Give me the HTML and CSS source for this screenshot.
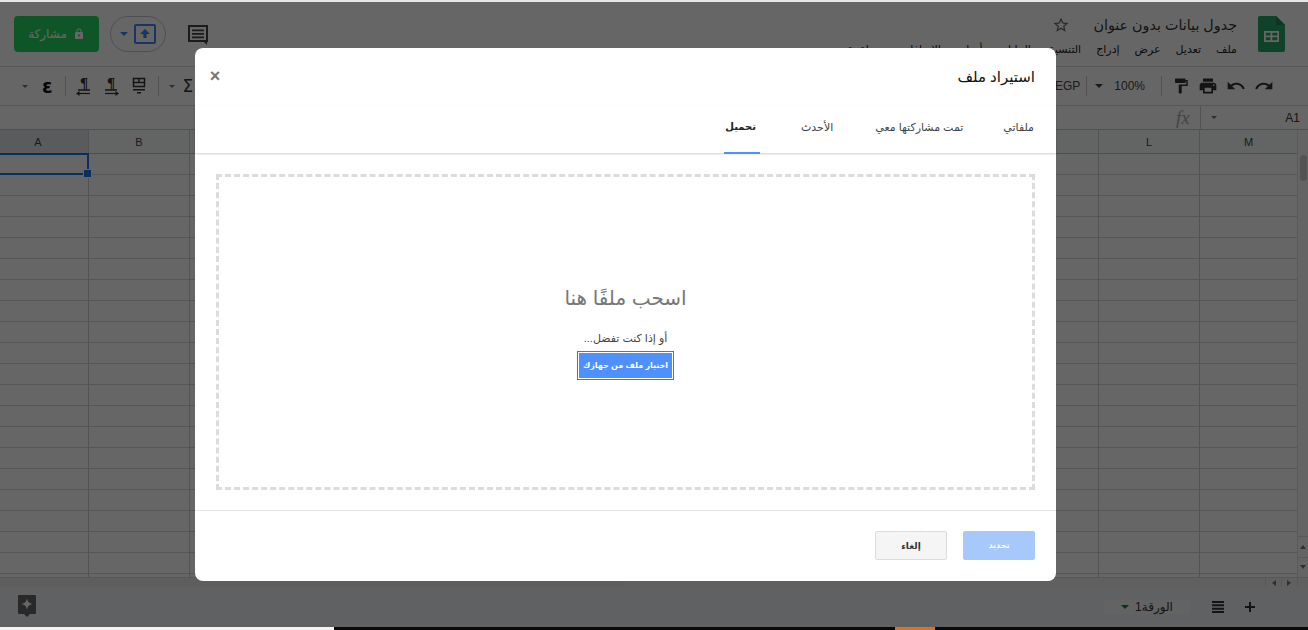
FILE: index.html
```html
<!DOCTYPE html>
<html lang="ar">
<head>
<meta charset="utf-8">
<title>جدول بيانات بدون عنوان</title>
<link rel="stylesheet" href="styles.css">
</head>
<body>
<div class="top-edge"></div>
<div class="app">
  <header class="header">
    <div class="header-left">
      <button class="share"><span dir="rtl">مشاركة</span>
        <svg class="i12" viewBox="0 0 24 24"><path fill="#fff" d="M18 8h-1V6c0-2.76-2.24-5-5-5S7 3.24 7 6v2H6c-1.1 0-2 .9-2 2v10c0 1.1.9 2 2 2h12c1.1 0 2-.9 2-2V10c0-1.1-.9-2-2-2zm-6 9c-1.1 0-2-.9-2-2s.9-2 2-2 2 .9 2 2-.9 2-2 2zm3.1-9H8.9V6c0-1.71 1.39-3.1 3.1-3.1 1.71 0 3.1 1.39 3.1 3.1v2z"/></svg>
      </button>
      <div class="present">
        <span class="caret blue"></span>
        <svg class="present-icon" viewBox="0 0 22 22"><rect x="1" y="2" width="20" height="18" rx="1" fill="none" stroke="#4285f4" stroke-width="2"/><path fill="#4285f4" d="M11 6l5 5h-3.400v4h-3.200v-4H6z"/></svg>
      </div>
      <svg class="comment" viewBox="0 0 20 22"><path fill="none" stroke="#444" stroke-width="2" d="M1 2h18v15H1z"/><path fill="#444" d="M4 5.500h12v1.800H4zM4 9h12v1.800H4zM4 12.500h12v1.800H4zM15 17h4v4z"/></svg>
    </div>
    <div class="header-right">
      <div class="doc">
        <div class="doc-title">
          <svg class="i18" viewBox="0 0 24 24"><path fill="#5f6368" d="M22 9.240l-7.190-.620L12 2 9.190 8.630 2 9.240l5.460 4.730L5.820 21 12 17.270 18.180 21l-1.630-7.030L22 9.240zM12 15.400l-3.760 2.270 1-4.280-3.320-2.880 4.380-.380L12 6.100l1.710 4.040 4.380.380-3.320 2.880 1 4.280L12 15.400z"/></svg>
          <span class="title-text" dir="rtl">جدول بيانات بدون عنوان</span>
        </div>
        <nav class="menu" dir="rtl">
          <span>ملف</span><span>تعديل</span><span>عرض</span><span>إدراج</span><span>التنسيق</span><span>البيانات</span><span>أدوات</span><span>الإضافات</span><span>مساعدة</span>
        </nav>
      </div>
      <svg class="logo" viewBox="0 0 27 36"><path fill="#23a566" d="M2 0h16l9 9v25a2 2 0 0 1-2 2H2a2 2 0 0 1-2-2V2a2 2 0 0 1 2-2z"/><path fill="#1c8a55" d="M18 0l9 9h-9z"/><path fill="#fff" d="M6 15h15v11H6zm1.800 1.800v2.800h4.700v-2.800zm6.500 0v2.800h5v-2.800zm-6.500 4.500v3h4.700v-3zm6.500 0v3h5v-3z"/></svg>
    </div>
  </header>

  <div class="toolbar">
    <div class="tools tools-left">
      <span class="caret small"></span>
      <span class="glyph epsilon">ε</span>
      <span class="tb-sep sep-a"></span>
      <svg class="i20 p1" viewBox="0 0 20 20"><text class="para" x="10" y="12" text-anchor="middle">¶</text><path stroke="#333" stroke-width="1.500" d="M4 14h12"/><path stroke="#333" stroke-width="1.200" d="M4 17.500h12"/><path fill="#333" d="M2 17.500l3.500-2.500v5z"/></svg>
      <svg class="i20 p2" viewBox="0 0 20 20"><text class="para" x="10" y="12" text-anchor="middle">¶</text><path stroke="#333" stroke-width="1.500" d="M4 14h12"/><path stroke="#333" stroke-width="1.200" d="M4 17.500h12"/><path fill="#333" d="M18 17.500l-3.500-2.500v5z"/></svg>
      <svg class="i20 p3" viewBox="0 0 20 20"><path fill="none" stroke="#333" stroke-width="1.500" d="M4.500 2.500h11v8h-11zM4.500 6.500h11M10 2.500v4"/><path fill="#333" d="M4 13h12v1.600H4zM8 16h4v1.600H8z"/></svg>
      <span class="tb-sep sep-b"></span>
      <span class="caret small caret-b"></span>
      <span class="glyph sigma">Σ</span>
    </div>
    <div class="tools tools-right">
      <span class="egp">EGP</span>
      <span class="tb-sep short"></span>
      <span class="caret"></span>
      <span class="zoom-val">100%</span>
      <span class="tb-sep zoom-sep"></span>
      <svg class="i18" viewBox="0 0 24 24"><path fill="#333" d="M18 4V3c0-.550-.450-1-1-1H5c-.550 0-1 .450-1 1v4c0 .550.450 1 1 1h12c.550 0 1-.450 1-1V6h1v4H9v11c0 .550.450 1 1 1h2c.550 0 1-.450 1-1v-9h8V4h-3z"/></svg>
      <svg class="i20" viewBox="0 0 24 24"><path fill="#333" d="M19 8H5c-1.660 0-3 1.340-3 3v6h4v4h12v-4h4v-6c0-1.660-1.340-3-3-3zm-3 11H8v-5h8v5zm3-7c-.550 0-1-.450-1-1s.450-1 1-1 1 .450 1 1-.450 1-1 1zm-1-9H6v4h12V3z"/></svg>
      <svg class="i20" viewBox="0 0 24 24"><path fill="#333" d="M12.500 8c-2.650 0-5.050.990-6.900 2.600L2 7v9h9l-3.620-3.620c1.390-1.160 3.160-1.880 5.120-1.880 3.540 0 6.550 2.310 7.600 5.500l2.370-.780C21.080 11.030 17.150 8 12.500 8z"/></svg>
      <svg class="i20" viewBox="0 0 24 24"><path fill="#333" d="M18.400 10.600C16.550 8.990 14.150 8 11.500 8c-4.650 0-8.580 3.030-9.960 7.220L3.900 16c1.050-3.190 4.050-5.500 7.600-5.500 1.950 0 3.730.720 5.120 1.880L13 16h9V7l-3.600 3.600z"/></svg>
    </div>
  </div>

  <div class="formula">
    <span class="fx">fx</span>
    <span class="tb-sep tall"></span>
    <span class="caret small"></span>
    <span class="cell-name">A1</span>
  </div>

  <div class="sheet-wrap">
    <div class="sheet">
      <div class="col col-a"><div class="col-head selected">A</div><div class="col-body"></div></div>
      <div class="col"><div class="col-head">B</div><div class="col-body"></div></div>
      <div class="col"><div class="col-head">C</div><div class="col-body"></div></div>
      <div class="col"><div class="col-head">D</div><div class="col-body"></div></div>
      <div class="col"><div class="col-head">E</div><div class="col-body"></div></div>
      <div class="col"><div class="col-head">F</div><div class="col-body"></div></div>
      <div class="col"><div class="col-head">G</div><div class="col-body"></div></div>
      <div class="col"><div class="col-head">H</div><div class="col-body"></div></div>
      <div class="col"><div class="col-head">I</div><div class="col-body"></div></div>
      <div class="col"><div class="col-head">J</div><div class="col-body"></div></div>
      <div class="col"><div class="col-head">K</div><div class="col-body"></div></div>
      <div class="col"><div class="col-head">L</div><div class="col-body"></div></div>
      <div class="col col-m"><div class="col-head">M</div><div class="col-body"></div></div>
      <div class="selection"></div>
    </div>
    <div class="vscroll">
      <div class="vthumb"></div>
      <div class="vbuttons"><span class="tri up"></span><span class="tri down"></span></div>
    </div>
  </div>

  <div class="hscroll">
    <div class="hthumb"></div>
    <div class="hbuttons"><span class="tri left"></span><span class="tri right"></span></div>
  </div>

  <div class="sheetbar">
    <svg class="explore" viewBox="0 0 18 22"><path fill="#666" d="M1 0h16a1 1 0 0 1 1 1v17a1 1 0 0 1-1 1h-5l-3 3-3-3H1a1 1 0 0 1-1-1V1a1 1 0 0 1 1-1z"/><path fill="#fff" d="M9 3.500c.700 3.300 2.200 4.800 5.500 5.500-3.300.700-4.800 2.200-5.500 5.500-.700-3.300-2.200-4.800-5.500-5.500 3.300-.700 4.800-2.200 5.500-5.500z"/></svg>
    <div class="sheetbar-right">
      <div class="tab"><span class="caret green"></span><span dir="rtl">الورقة1</span></div>
      <svg class="bar-icon list-icon" viewBox="0 0 12 12"><path fill="#333" d="M0 0h12v2H0zM0 3.300h12v2H0zM0 6.700h12v2H0zM0 10h12v2H0z"/></svg>
      <svg class="bar-icon" viewBox="0 0 12 12"><path fill="#333" d="M5 1h2v4h4v2H7v4H5V7H1V5h4z"/></svg>
    </div>
  </div>

  <div class="overlay">
    <section class="dialog" dir="rtl">
      <div class="dialog-head">
        <h1 class="dialog-title">استيراد ملف</h1>
        <button class="close" aria-label="إغلاق">×</button>
      </div>
      <div class="tabs">
        <span class="dtab t1">ملفاتي</span>
        <span class="dtab t2">تمت مشاركتها معي</span>
        <span class="dtab t3">الأحدث</span>
        <span class="dtab t4 active">تحميل</span>
      </div>
      <div class="dialog-body">
        <div class="dropzone">
          <div class="drop-title">اسحب ملفًا هنا</div>
          <div class="drop-sub">أو إذا كنت تفضل...</div>
          <button class="pick">اختيار ملف من جهازك</button>
        </div>
      </div>
      <div class="dialog-foot">
        <button class="btn btn-select">تحديد</button>
        <button class="btn btn-cancel">إلغاء</button>
      </div>
    </section>
  </div>
</div>
<div class="bottom-strip">
  <span class="strip-white"></span><span class="strip-black a"></span><span class="strip-orange"></span><span class="strip-black b"></span>
</div>
</body>
</html>
```

FILE: styles.css
```css
* { box-sizing: border-box; }
html, body { margin: 0; padding: 0; height: 630px; overflow: hidden; background: #fff; }
body { font-family: "Liberation Sans", "DejaVu Sans", sans-serif; color: #222; display: flex; flex-direction: column; }
svg { display: block; flex: none; }
button { font-family: inherit; cursor: default; }

.top-edge { height: 2px; background: #e6e6e6; flex: none; }
.app { position: relative; height: 625px; flex: none; display: flex; flex-direction: column; background: #fff; overflow: hidden; }
.bottom-strip { height: 3px; flex: none; display: flex; }
.strip-white { width: 334px; background: #f3f3f3; }
.strip-black { background: #0a0a0a; }
.strip-black.a { width: 561px; }
.strip-black.b { flex: 1; }
.strip-orange { width: 40px; background: #d9731f; }

/* header */
.header { height: 65px; flex: none; display: flex; justify-content: space-between; border-bottom: 1px solid #dadada; padding: 14px 23px 0 14px; }
.header-left { display: flex; align-items: flex-start; }
.share { width: 85px; height: 36px; background: #24d862; border: 0; border-radius: 4px; color: #fff; font-size: 12px; display: flex; align-items: center; justify-content: center; gap: 6px; padding: 0; }
.i12 { width: 12px; height: 12px; }
.i18 { width: 18px; height: 18px; }
.i20 { width: 20px; height: 20px; }
.bar-icon { width: 12px; height: 12px; }
.present { width: 56px; height: 36px; margin-left: 11px; border: 1px solid #c4c7c8; border-radius: 18px; display: flex; align-items: center; justify-content: center; gap: 6px; }
.present-icon { width: 22px; height: 22px; }
.comment { width: 20px; height: 22px; margin: 8px 0 0 22px; }
.caret { width: 0; height: 0; border-left: 4px solid transparent; border-right: 4px solid transparent; border-top: 4px solid #444; flex: none; }
.caret.blue { border-top-color: #4285f4; }
.caret.small { border-left-width: 3px; border-right-width: 3px; border-top-width: 3px; border-top-color: #777; }
.caret.green { border-top-color: #188038; }
.header-right { display: flex; align-items: flex-start; gap: 21px; }
.doc { display: flex; flex-direction: column; align-items: flex-end; gap: 9px; }
.doc-title { display: flex; align-items: center; gap: 23px; height: 18px; }
.title-text { font-size: 14.3px; color: #333; white-space: nowrap; }
.menu { display: flex; gap: 15px; font-size: 11px; color: #222; white-space: nowrap; height: 16px; }
.logo { width: 27px; height: 36px; }

/* toolbar */
.toolbar { height: 39px; flex: none; display: flex; justify-content: space-between; align-items: center; border-bottom: 1px solid #dadada; padding: 0 34px 0 22px; }
.tools { display: flex; align-items: center; }
.tools-right { gap: 8px; }
.tb-sep { width: 1px; height: 20px; background: #d0d0d0; flex: none; }
.tb-sep.tall { height: 23px; margin: 0 12px 0 0; }
.glyph { font-family: "DejaVu Sans", sans-serif; color: #111; }
.epsilon { font-size: 19px; font-weight: bold; margin-left: 14px; }
.sep-a { margin-left: 12px; }
.p1 { margin-left: 8px; }
.p2 { margin-left: 7px; }
.p3 { margin-left: 8px; }
.sep-b { margin-left: 9px; }
.caret-b { margin-left: 10px; }
.sigma { font-size: 17px; color: #333; margin-left: 8px; }
.para { font-family: "Liberation Serif", serif; font-size: 15px; font-weight: bold; fill: #333; }
.egp { font-size: 12px; color: #444; margin-right: -2px; }
.zoom-val { font-size: 12px; color: #444; margin-left: 3px; }
.zoom-sep { margin: 0 2px 0 8px; }

/* formula bar */
.formula { height: 24px; flex: none; display: flex; align-items: center; border-bottom: 1px solid #c8c8c8; padding-right: 8px; }
.fx { margin-left: 1176px; width: 24px; font-family: "Liberation Serif", serif; font-style: italic; font-size: 19px; color: #aaa; }
.formula .caret { margin-left: -2px; }
.cell-name { margin-left: auto; font-size: 12px; color: #333; }

/* sheet */
.sheet-wrap { height: 447px; flex: none; display: flex; overflow: hidden; }
.sheet { position: relative; width: 1297px; display: flex; flex: none; }
.col { width: 101px; flex: none; display: flex; flex-direction: column; border-right: 1px solid #cfcfcf; }
.col-a { width: 89px; }
.col-m { width: 98px; }
.col-head { height: 24px; flex: none; background: #f8f9fa; border-bottom: 1px solid #c4c4c4; font-size: 11px; color: #444; display: flex; align-items: center; justify-content: center; }
.col-head.selected { background: #e2e3e5; }
.col-a .col-head { padding-right: 12px; }
.col-body { flex: 1; background: repeating-linear-gradient(to bottom, #fff 0 20px, #d6d6d6 20px 21px); }
.selection { position: absolute; left: -4px; top: 23px; width: 93px; height: 22px; border: 2px solid #1a73e8; }
.selection::after { content: ""; position: absolute; right: -5px; bottom: -5px; width: 7px; height: 7px; background: #1a73e8; border: 1px solid #fff; }
.vscroll { flex: 1; background: #fbfbfb; border-left: 1px solid #e4e4e4; display: flex; flex-direction: column; justify-content: flex-end; position: relative; }
.vthumb { position: absolute; left: 2px; top: 25px; width: 7px; height: 26px; background: #d0d0d0; border-radius: 4px; }
.vbuttons { display: flex; flex-direction: column; border-top: 1px solid #dcdcdc; background: linear-gradient(#dcdcdc, #dcdcdc) center / 100% 1px no-repeat; }
.tri { width: 0; height: 0; display: block; }
.vbuttons .tri { margin: 8px auto; }
.tri.up { border-left: 3px solid transparent; border-right: 3px solid transparent; border-bottom: 4px solid #777; }
.tri.down { border-left: 3px solid transparent; border-right: 3px solid transparent; border-top: 4px solid #777; }
.tri.left { border-top: 3px solid transparent; border-bottom: 3px solid transparent; border-right: 4px solid #777; }
.tri.right { border-top: 3px solid transparent; border-bottom: 3px solid transparent; border-left: 4px solid #777; }

.hscroll { height: 10px; flex: none; background: #f1f1f1; border-top: 1px solid #dadada; display: flex; justify-content: space-between; align-items: center; padding-right: 10px; }
.hthumb { width: 623px; height: 9px; background: #ececec; }
.hbuttons { width: 33px; height: 100%; display: grid; grid-template-columns: 1fr 1fr; place-items: center; border-left: 1px solid #dcdcdc; border-right: 1px solid #dcdcdc; background: linear-gradient(#dcdcdc, #dcdcdc) center / 1px 100% no-repeat; }

/* sheet tabs */
.sheetbar { flex: 1; background: #f1f3f4; display: flex; justify-content: space-between; align-items: center; padding: 0 52px 0 18px; }
.explore { width: 18px; height: 22px; margin-top: -2px; }
.sheetbar-right { display: flex; align-items: center; align-self: stretch; }
.tab { width: 86px; background: #f8f8f8; display: flex; align-items: center; justify-content: center; gap: 6px; font-size: 12px; color: #333; }
.list-icon { margin: 0 20px 0 22px; }

/* dialog */
.overlay { position: absolute; inset: 0; background: rgba(0, 0, 0, .6); }
.dialog { position: absolute; left: 195px; top: 46px; width: 861px; height: 533px; background: #fff; border-radius: 8px; display: flex; flex-direction: column; }
.dialog-head { height: 58px; flex: none; display: flex; justify-content: space-between; align-items: center; padding: 0 21px 0 14px; }
.dialog-title { margin: 0; font-size: 15px; font-weight: normal; color: #111; }
.close { border: 0; background: none; padding: 0 0 2px; width: 12px; font-size: 18px; font-weight: bold; line-height: 1; color: #777; font-family: "Liberation Sans", sans-serif; }
.tabs { height: 47px; flex: none; display: flex; align-items: flex-start; font-size: 11px; color: #444; padding-top: 13px; box-shadow: 0 1px 2px rgba(0, 0, 0, .2); position: relative; }
.dtab { white-space: nowrap; line-height: 16px; position: relative; }
.t1 { margin-right: 22px; }
.t2 { margin-right: 40px; }
.t3 { margin-right: 42px; }
.t4 { margin-right: 45px; font-size: 10px; font-weight: bold; color: #222; }
.active::after { content: ""; position: absolute; left: -1px; right: -4px; top: 33px; height: 2px; background: #4d90fe; }
.dialog-body { flex: 1; padding: 21px 21px 20px 21px; }
.dropzone { height: 100%; border: 3px dashed #dcdcdc; display: flex; flex-direction: column; align-items: center; padding-top: 109px; }
.drop-title { font-size: 20px; color: #777; line-height: 24px; }
.drop-sub { font-size: 11px; color: #444; margin-top: 21px; line-height: 14px; }
.pick { margin-top: 6px; width: 97px; height: 29px; background: #4d90fe; border: 1px solid #3079ed; box-shadow: inset 0 0 0 1px #fff; color: #fff; font-size: 8px; font-weight: bold; padding: 0; white-space: nowrap; }
.dialog-foot { height: 71px; flex: none; border-top: 1px solid #e5e5e5; display: flex; gap: 16px; padding: 20px 21px 0; }
.btn { width: 72px; height: 29px; border-radius: 2px; font-size: 8px; font-weight: bold; padding: 0; }
.btn-select { background: #a6c8fb; border: 1px solid #a6c8fb; color: #fff; }
.btn-cancel { background: #f5f5f5; border: 1px solid #dcdcdc; color: #333; font-size: 9px; }
```
